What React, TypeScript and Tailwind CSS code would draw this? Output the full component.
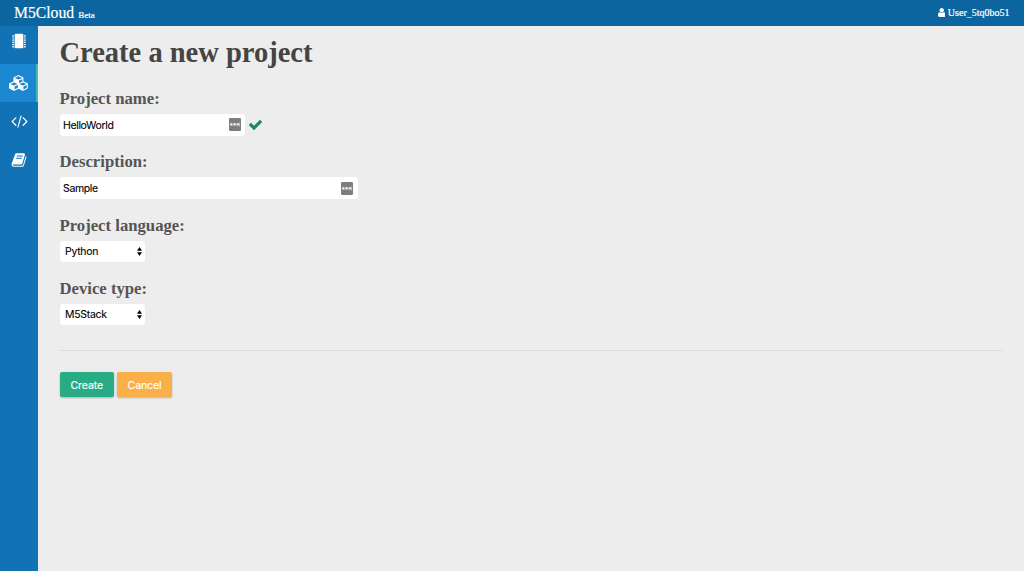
import type { ReactNode } from 'react'

interface IconProps {
  className?: string
}

function UserIcon({ className }: IconProps) {
  return (
    <svg viewBox="256 128 1280 1536" fill="currentColor" className={className}>
      <path d="M1536 1399q0 109-62.5 187t-150.5 78h-854q-88 0-150.5-78t-62.5-187q0-85 8.5-160.5t31.5-152 58.5-131 94-89 134.5-34.5q131 128 313 128t313-128q76 0 134.5 34.5t94 89 58.5 131 31.5 152 8.5 160.5zm-256-887q0 159-112.5 271.5t-271.5 112.5-271.5-112.5-112.5-271.5 112.5-271.5 271.5-112.5 271.5 112.5 112.5 271.5z" />
    </svg>
  )
}

function ChipIcon() {
  return (
    <svg viewBox="0 0 14 16" fill="currentColor" className="mb-[7px] h-4 w-3.5">
      <rect x="2.8" y="0.8" width="8.4" height="14.4" rx="0.8" />
      <path d="M.3 2.2H2.3v1.2H.3zM.3 4.4H2.3v1.2H.3zM.3 6.6H2.3v1.2H.3zM.3 8.8H2.3V10H.3zM.3 11H2.3v1.2H.3zM.3 13.2H2.3v1.2H.3zM11.7 2.2h2v1.2h-2zM11.7 4.4h2v1.2h-2zM11.7 6.6h2v1.2h-2zM11.7 8.8h2V10h-2zM11.7 11h2v1.2h-2zM11.7 13.2h2v1.2h-2z" />
    </svg>
  )
}

function CubesIcon() {
  return (
    <svg viewBox="0 0 2304 1792" fill="currentColor" className="h-4 w-5">
      <path d="M640 1632l384-192v-314l-384 164v342zm-64-454l404-173-404-173-404 173zm1088 454l384-192v-314l-384 164v342zm-64-454l404-173-404-173-404 173zm-448-293l384-165v-266l-384 164v267zm-64-379l441-189-441-189-441 189zm1088 518v416q0 36-19 67t-52 47l-448 224q-25 14-57 14t-57-14l-448-224q-4-2-7-4-2 2-7 4l-448 224q-25 14-57 14t-57-14l-448-224q-33-16-52-47t-19-67v-416q0-38 21.5-70t56.5-48l434-186v-400q0-38 21.5-70t56.5-48l448-192q23-10 50-10t50 10l448 192q35 16 56.5 48t21.5 70v400l434 186q36 16 57 48t21 70z" />
    </svg>
  )
}

function CodeIcon() {
  return (
    <svg viewBox="0 0 1920 1792" fill="currentColor" className="h-4 w-[17px]">
      <path d="M617 1399l-50 50q-10 10-23 10t-23-10l-466-466q-10-10-10-23t10-23l466-466q10-10 23-10t23 10l50 50q10 10 10 23t-10 23l-393 393 393 393q10 10 10 23t-10 23zm591-1067l-373 1291q-4 13-15.5 19.5t-23.5 2.5l-62-17q-13-4-19.5-15.5t-2.5-24.5l373-1291q4-13 15.5-19.5t23.5-2.5l62 17q13 4 19.5 15.5t2.5 24.5zm657 651l-466 466q-10 10-23 10t-23-10l-50-50q-10-10-10-23t10-23l393-393-393-393q-10-10-10-23t10-23l50-50q10-10 23-10t23 10l466 466q10 10 10 23t-10 23z" />
    </svg>
  )
}

function BookIcon() {
  return (
    <svg viewBox="0 0 1792 1792" fill="currentColor" className="size-4">
      <path d="M1703 478q40 57 18 129l-275 906q-19 64-76.5 107.5t-122.5 43.5h-923q-77 0-148.5-53.5t-99.5-131.5q-24-67-2-127 0-4 3-27t4-37q1-8-3-21.5t-3-19.5q2-11 8-21t16.5-23.5 16.5-23.5q23-38 45-91.5t30-91.5q3-10 .5-30t-.5-28q3-11 17-28t17-23q21-36 42-92t25-90q1-9-2.5-32t.5-28q4-13 22-30.5t22-22.5q19-26 42.5-84.5t27.5-96.5q1-8-3-25.5t-2-26.5q2-8 9-18t18-23 17-21q8-12 16.5-30.5t15-35 16-36 19.5-32 26.5-23.5 36-11.5 47.5 5.5l-1 3q38-9 51-9h761q74 0 114 56t18 130l-274 906q-36 119-71.5 153.5t-128.5 34.5h-869q-27 0-38 15-11 16-1 43 24 70 144 70h923q29 0 56-15.5t35-41.5l300-987q7-22 5-57 38 15 59 43zm-1064 2q-4 13 2 22.5t20 9.5h608q13 0 25.5-9.5t16.5-22.5l21-64q4-13-2-22.5t-20-9.5h-608q-13 0-25.5 9.5t-16.5 22.5zm-83 256q-4 13 2 22.5t20 9.5h608q13 0 25.5-9.5t16.5-22.5l21-64q4-13-2-22.5t-20-9.5h-608q-13 0-25.5 9.5t-16.5 22.5z" />
    </svg>
  )
}

function CheckIcon({ className }: IconProps) {
  return (
    <svg viewBox="121 334 1550 1188" fill="currentColor" className={className}>
      <path d="M1671 566q0 40-28 68l-724 724-136 136q-28 28-68 28t-68-28l-136-136-362-362q-28-28-28-68t28-68l136-136q28-28 68-28t68 28l294 295 656-657q28-28 68-28t68 28l136 136q28 28 28 68z" />
    </svg>
  )
}

// Small autofill badge at the end of a text field
function FillBadge() {
  return (
    <svg viewBox="0 0 12 13" className="h-[13px] w-3 shrink-0">
      <rect width="12" height="13" rx="1.2" fill="#7e7e7e" />
      <path d="M1.2 5.3h2.3v2.3H1.2zM4.4 5.3h2.3v2.3H4.4zM7.6 5.3h2.3v2.3H7.6zM10.4 4.5h.5v4h-.5z" fill="#f4f4f4" />
    </svg>
  )
}

function NavItem({ active, children }: { active?: boolean; children: ReactNode }) {
  return (
    <a
      className={`flex h-[38.4px] items-center justify-center text-white ${
        active ? 'border-r-2 border-[#42bba8] bg-[#1b87d0] pl-0.5' : ''
      }`}
    >
      {children}
    </a>
  )
}

function Field({ label, children }: { label: string; children: ReactNode }) {
  return (
    <div className="h-[63.2px]">
      <label className="block h-[25px] font-['Liberation_Serif',serif] text-[16.7px] leading-5 font-bold text-[#555]">
        {label}
      </label>
      <div className="flex items-center">{children}</div>
    </div>
  )
}

function TextInput({ value, className }: { value: string; className: string }) {
  return (
    <div className={`flex h-[21.5px] items-center justify-between rounded-[3px] bg-white pl-[3.5px] text-black ${className}`}>
      <span className="pt-[2px] tracking-[-0.35px] [-webkit-text-stroke:0.1px]">{value}</span>
      <FillBadge />
    </div>
  )
}

function Select({ value }: { value: string }) {
  return (
    <div className="flex h-[21.5px] w-[85.5px] items-center justify-between rounded-[3px] bg-white pr-[3px] pl-[5.5px] text-black">
      <span className="pt-px tracking-[-0.3px] [-webkit-text-stroke:0.1px]">{value}</span>
      <svg viewBox="0 0 5 9" className="h-[9px] w-[5px]">
        <path d="M2.5 0L5 3.8H0zM2.5 9L5 5.2H0z" />
      </svg>
    </div>
  )
}

export default function App() {
  return (
    <div className="flex h-screen flex-col bg-[#ededed] font-[Inter,sans-serif] text-[10.5px]">
      <header className="flex h-[25.5px] shrink-0 items-center justify-between bg-[#0c659e] pr-[14.5px] pl-3.5 font-['Liberation_Serif',serif] text-white">
        <div className="flex items-baseline gap-1">
          <span className="text-[15.7px] leading-6 [-webkit-text-stroke:0.2px]">M5Cloud</span>
          <span className="text-[9px] [-webkit-text-stroke:0.2px]">Beta</span>
        </div>
        <div className="flex items-center gap-[2.5px] text-[10px] [-webkit-text-stroke:0.2px]">
          <UserIcon className="h-[9px] w-[7.5px]" />
          <span>User_5tq0bo51</span>
        </div>
      </header>

      <div className="flex min-h-0 flex-1">
        <nav className="w-[38px] shrink-0 bg-[#1173b5]">
          <NavItem>
            <ChipIcon />
          </NavItem>
          <NavItem active>
            <CubesIcon />
          </NavItem>
          <NavItem>
            <CodeIcon />
          </NavItem>
          <NavItem>
            <BookIcon />
          </NavItem>
        </nav>

        <main className="flex-1 pt-[11px] pr-[22px] pl-[21.5px]">
          <h1 className="h-[52.7px] font-['Liberation_Serif',serif] text-[28.5px] leading-8 font-bold text-[#444]">
            Create a new project
          </h1>

          <Field label="Project name:">
            <TextInput value="HelloWorld" className="w-[185px] pr-[3.5px]" />
            <CheckIcon className="ml-1 h-[10px] w-[13px] text-[#1b8767]" />
          </Field>
          <Field label="Description:">
            <TextInput value="Sample" className="w-[298.5px] pr-[5px]" />
          </Field>
          <Field label="Project language:">
            <Select value="Python" />
          </Field>
          <Field label="Device type:">
            <Select value="M5Stack" />
          </Field>

          <hr className="mt-[8px] border-[#dcdcdc]" />

          <div className="mt-[21.2px] flex gap-[3px] text-white">
            <button className="h-[25px] w-[54.5px] rounded-[2px] bg-[#29ac85] pt-[2px] tracking-[-0.1px] shadow-[0_1px_2px_rgba(0,0,0,0.25)] [-webkit-text-stroke:0.15px]">
              Create
            </button>
            <button className="h-[25px] w-[55px] rounded-[2px] bg-[#f9b04b] pt-[2px] tracking-[-0.1px] shadow-[0_1px_2px_rgba(0,0,0,0.25)] [-webkit-text-stroke:0.15px]">
              Cancel
            </button>
          </div>
        </main>
      </div>
    </div>
  )
}
